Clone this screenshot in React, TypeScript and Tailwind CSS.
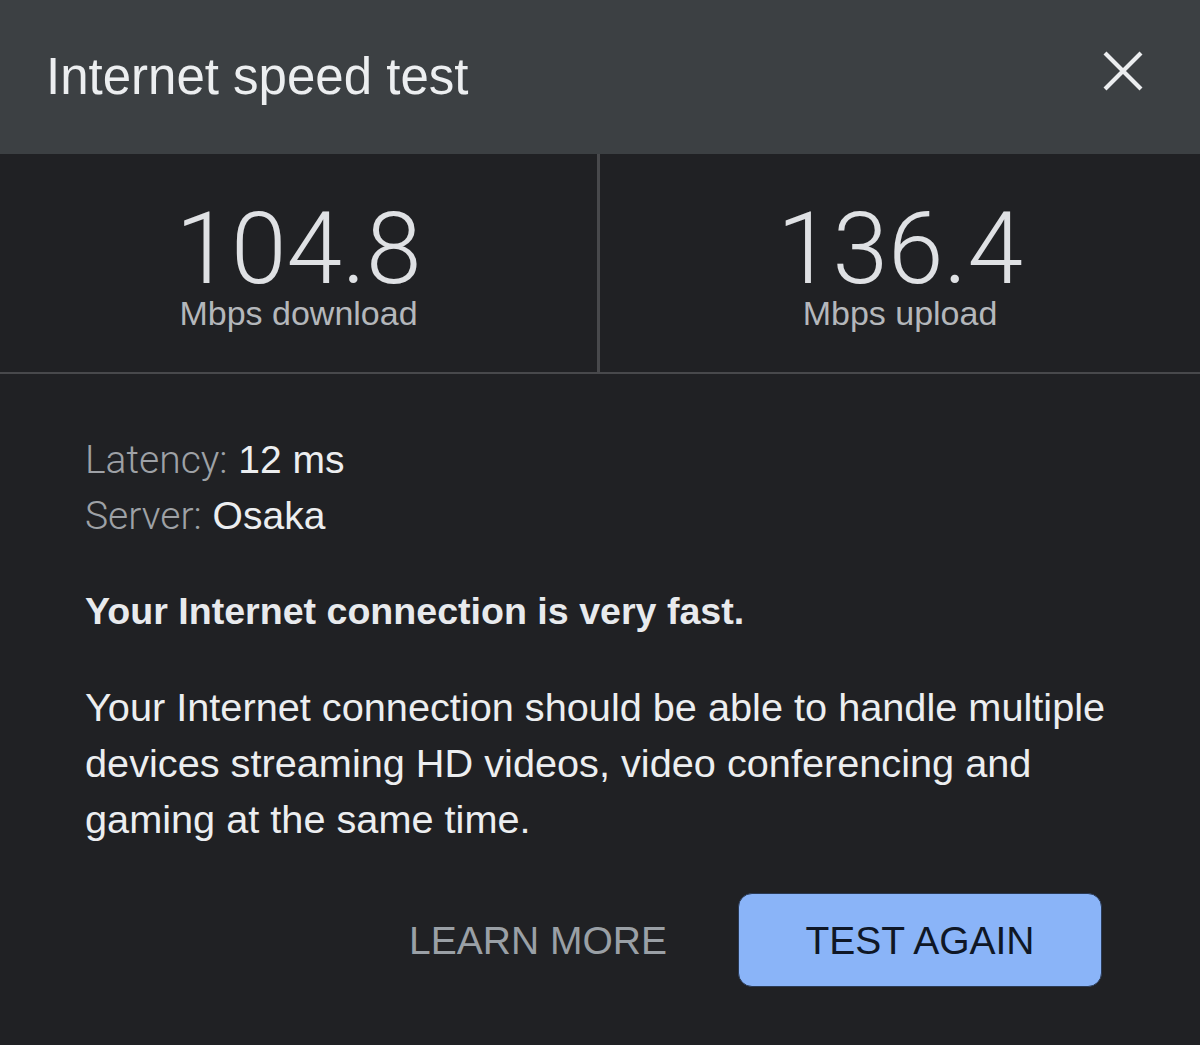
const stats = [
  { value: '104.8', label: 'Mbps download' },
  { value: '136.4', label: 'Mbps upload' },
];

export default function App() {
  return (
    <div className="w-[1200px] h-[1045px] bg-[#202124] font-['Liberation_Sans',Arial,sans-serif] overflow-hidden">
      {/* Header */}
      <div className="h-[154px] bg-[#3c4043] flex items-center justify-between pl-[46px] pr-[57px]">
        <h1 className="text-[51px] leading-none text-[#eceef0] -mt-[2px]">Internet speed test</h1>
        <svg viewBox="0 0 40 40" className="w-[40px] h-[40px] mb-[12px]" fill="none" stroke="#eceef0" strokeWidth={4.2}>
          <path d="M2 2 L38 38 M38 2 L2 38" />
        </svg>
      </div>

      {/* Results */}
      <div className="grid grid-cols-2 h-[220px] border-b-2 border-[#48494c]">
        {stats.map((s, i) => (
          <div
            key={s.label}
            className={`flex flex-col items-center pt-[48px] ${i === 0 ? 'border-r-[3px] border-[#48494c]' : ''}`}
          >
            <div className="font-['Roboto',sans-serif] font-light text-[100px] leading-[94px] text-[#dfe1e4]">
              {s.value}
            </div>
            <div className="text-[34px] leading-[34px] text-[#b4b7bb]">{s.label}</div>
          </div>
        ))}
      </div>

      {/* Details */}
      <div className="pl-[85px] pr-[98px] pt-[58px]">
        <div className="text-[39px] leading-[56px] text-[#eceef0]">
          <p>
            <span className="font-['Roboto',sans-serif] font-light text-[#9ea1a6]">Latency:</span> 12 ms
          </p>
          <p>
            <span className="font-['Roboto',sans-serif] font-light text-[#9ea1a6]">Server:</span> Osaka
          </p>
        </div>

        <p className="mt-[39px] text-[37.6px] leading-[56px] font-bold text-[#e8eaed]">
          Your Internet connection is very fast.
        </p>

        <p className="mt-[40px] text-[39.7px] leading-[56px] text-[#eceef0] whitespace-nowrap">
          <span className="block">Your Internet connection should be able to handle multiple</span>
          <span className="block">devices streaming HD videos, video conferencing and</span>
          <span className="block">gaming at the same time.</span>
        </p>

        <div className="mt-[46px] flex items-center justify-end gap-[71px]">
          <button className="text-[39px] leading-none text-[#9aa0a6]">LEARN MORE</button>
          <button className="w-[364px] h-[94px] rounded-[14px] bg-[#8ab4f8] border border-[#2a3a55] text-[39px] leading-none text-[#0f1726]">
            TEST AGAIN
          </button>
        </div>
      </div>
    </div>
  );
}
